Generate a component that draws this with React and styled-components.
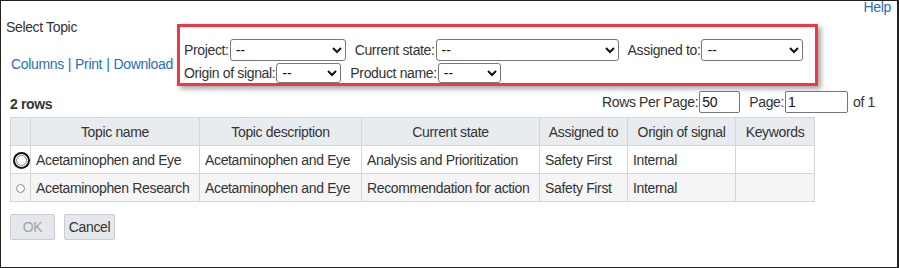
import React from "react";
import styled, { createGlobalStyle } from "styled-components";

const Global = createGlobalStyle`
  html, body { margin: 0; padding: 0; background: #fff; }
  body { font-family: "Liberation Sans", Arial, sans-serif; font-size: 14px; color: #333; }
  * { box-sizing: border-box; }
`;

const Frame = styled.div`
  width: 899px;
  height: 268px;
  border: 1px solid #222;
  border-right-width: 2px;
  background: #fff;
  display: flex;
  flex-direction: column;
  letter-spacing: -0.35px;
  overflow: hidden;
`;

const Header = styled.div`
  display: flex;
  align-items: flex-start;
  height: 85px;
`;

const LeftCol = styled.div`
  width: 176px;
  padding-left: 5px;
  display: flex;
  flex-direction: column;
`;

const Title = styled.div`
  margin-top: 18px;
  line-height: 16px;
  color: #333;
`;

const Links = styled.div`
  margin-top: 21px;
  padding-left: 5px;
  line-height: 16px;
  color: #2a6ebb;
  white-space: nowrap;
`;

const Link = styled.a`
  color: #2a6ebb;
  text-decoration: none;
  cursor: pointer;
`;

const Sep = styled.span`
  margin: 0 4px;
`;

const FilterBox = styled.div`
  margin-top: 23px;
  width: 641px;
  height: 62px;
  border: 3px solid #ee3a43;
  box-shadow: 3px 3px 5px rgba(0, 0, 0, 0.35);
  padding: 12px 0 0 4px;
  display: flex;
  flex-direction: column;
  gap: 2px;
`;

const FilterRow = styled.div`
  display: flex;
  align-items: center;
  gap: 9px;
  height: ${(p) => p.$h}px;
`;

const Field = styled.label`
  display: flex;
  align-items: center;
  gap: 1px;
  white-space: nowrap;
  color: #333;
`;

const Select = styled.select`
  width: ${(p) => p.$w}px;
  height: ${(p) => p.$h}px;
  font-family: "Liberation Sans", Arial, sans-serif;
  font-size: 14px;
  color: #111;
  background: #fff;
  border: 1px solid #767676;
  border-radius: 3px;
  padding: 0 0 0 1px;
  letter-spacing: 0;
`;

const Help = styled(Link)`
  margin-left: auto;
  margin-top: -2px;
  padding-right: 6px;
  line-height: 16px;
`;

const Toolbar = styled.div`
  margin-top: 5px;
  height: 22px;
  display: flex;
  align-items: center;
  padding-left: 9px;
  padding-right: 22px;
`;

const RowCount = styled.div`
  font-weight: bold;
  color: #333;
  padding-top: 4px;
`;

const Pager = styled.div`
  margin-left: auto;
  display: flex;
  align-items: center;
  color: #333;
  white-space: nowrap;
`;

const PagerInput = styled.input`
  width: ${(p) => p.$w}px;
  height: 22px;
  margin: 0 ${(p) => p.$mr}px 0 1px;
  border: 1px solid #767676;
  border-radius: 2px;
  padding: 0 2px;
  font-family: "Liberation Sans", Arial, sans-serif;
  font-size: 14px;
  color: #111;
  letter-spacing: -0.35px;
`;

const Table = styled.table`
  margin: 4px 0 0 9px;
  border-collapse: collapse;
  table-layout: fixed;
  width: 804px;
  color: #333;
`;

const Th = styled.th`
  height: 28px;
  background: #e9ecef;
  border: 1px solid #d4d6d8;
  font-weight: normal;
  text-align: center;
  padding: 0 4px;
  white-space: nowrap;
`;

const Tr = styled.tr`
  background: ${(p) => (p.$alt ? "#f5f5f5" : "#fff")};
`;

const Td = styled.td`
  height: 28px;
  border: 1px solid #d4d6d8;
  padding: 0 5px;
  white-space: nowrap;
  text-align: ${(p) => (p.$center ? "center" : "left")};
`;

const Radio = styled.span`
  display: inline-block;
  vertical-align: middle;
  width: ${(p) => (p.$focused ? 11 : 9)}px;
  height: ${(p) => (p.$focused ? 11 : 9)}px;
  border-radius: 50%;
  border: 1px solid #8a8a8a;
  background: #fff;
  box-shadow: ${(p) =>
    p.$focused ? "0 0 0 1px #fff, 0 0 0 3px #111" : "none"};
`;

const Buttons = styled.div`
  margin: 12px 0 0 9px;
  display: flex;
  gap: 9px;
`;

const Button = styled.button`
  height: 26px;
  width: ${(p) => p.$w}px;
  background: #e4e7eb;
  border: 1px solid #c9cdd2;
  border-radius: 2px;
  font-family: "Liberation Sans", Arial, sans-serif;
  font-size: 14px;
  letter-spacing: -0.35px;
  color: ${(p) => (p.disabled ? "#a3a3a3" : "#333")};
  padding: 0;
`;

const cols = [20, 169, 162, 178, 88, 108, 79];

const rows = [
  ["Acetaminophen and Eye", "Acetaminophen and Eye", "Analysis and Prioritization", "Safety First", "Internal", ""],
  ["Acetaminophen Research", "Acetaminophen and Eye", "Recommendation for action", "Safety First", "Internal", ""],
];

export default function App() {
  return (
    <>
      <Global />
      <Frame>
        <Header>
          <LeftCol>
            <Title>Select Topic</Title>
            <Links>
              <Link>Columns</Link>
              <Sep>|</Sep>
              <Link>Print</Link>
              <Sep>|</Sep>
              <Link>Download</Link>
            </Links>
          </LeftCol>
          <FilterBox>
            <FilterRow $h={22}>
              <Field>
                Project:
                <Select $w={116} $h={22}><option>--</option></Select>
              </Field>
              <Field>
                Current state:
                <Select $w={183} $h={22}><option>--</option></Select>
              </Field>
              <Field>
                Assigned to:
                <Select $w={102} $h={22}><option>--</option></Select>
              </Field>
            </FilterRow>
            <FilterRow $h={20}>
              <Field>
                Origin of signal:
                <Select $w={65} $h={20}><option>--</option></Select>
              </Field>
              <Field>
                Product name:
                <Select $w={63} $h={20}><option>--</option></Select>
              </Field>
            </FilterRow>
          </FilterBox>
          <Help>Help</Help>
        </Header>

        <Toolbar>
          <RowCount>2 rows</RowCount>
          <Pager>
            Rows Per Page:
            <PagerInput $w={41} $mr={9} defaultValue="50" />
            Page:
            <PagerInput $w={63} $mr={5} defaultValue="1" />
            of 1
          </Pager>
        </Toolbar>

        <Table>
          <colgroup>
            {cols.map((w, i) => (
              <col key={i} style={{ width: w }} />
            ))}
          </colgroup>
          <thead>
            <tr>
              <Th />
              <Th>Topic name</Th>
              <Th>Topic description</Th>
              <Th>Current state</Th>
              <Th>Assigned to</Th>
              <Th>Origin of signal</Th>
              <Th>Keywords</Th>
            </tr>
          </thead>
          <tbody>
            {rows.map((r, i) => (
              <Tr key={i} $alt={i % 2 === 1}>
                <Td $center>
                  <Radio $focused={i === 0} />
                </Td>
                {r.map((c, j) => (
                  <Td key={j}>{c}</Td>
                ))}
              </Tr>
            ))}
          </tbody>
        </Table>

        <Buttons>
          <Button $w={45} disabled>OK</Button>
          <Button $w={51}>Cancel</Button>
        </Buttons>
      </Frame>
    </>
  );
}
